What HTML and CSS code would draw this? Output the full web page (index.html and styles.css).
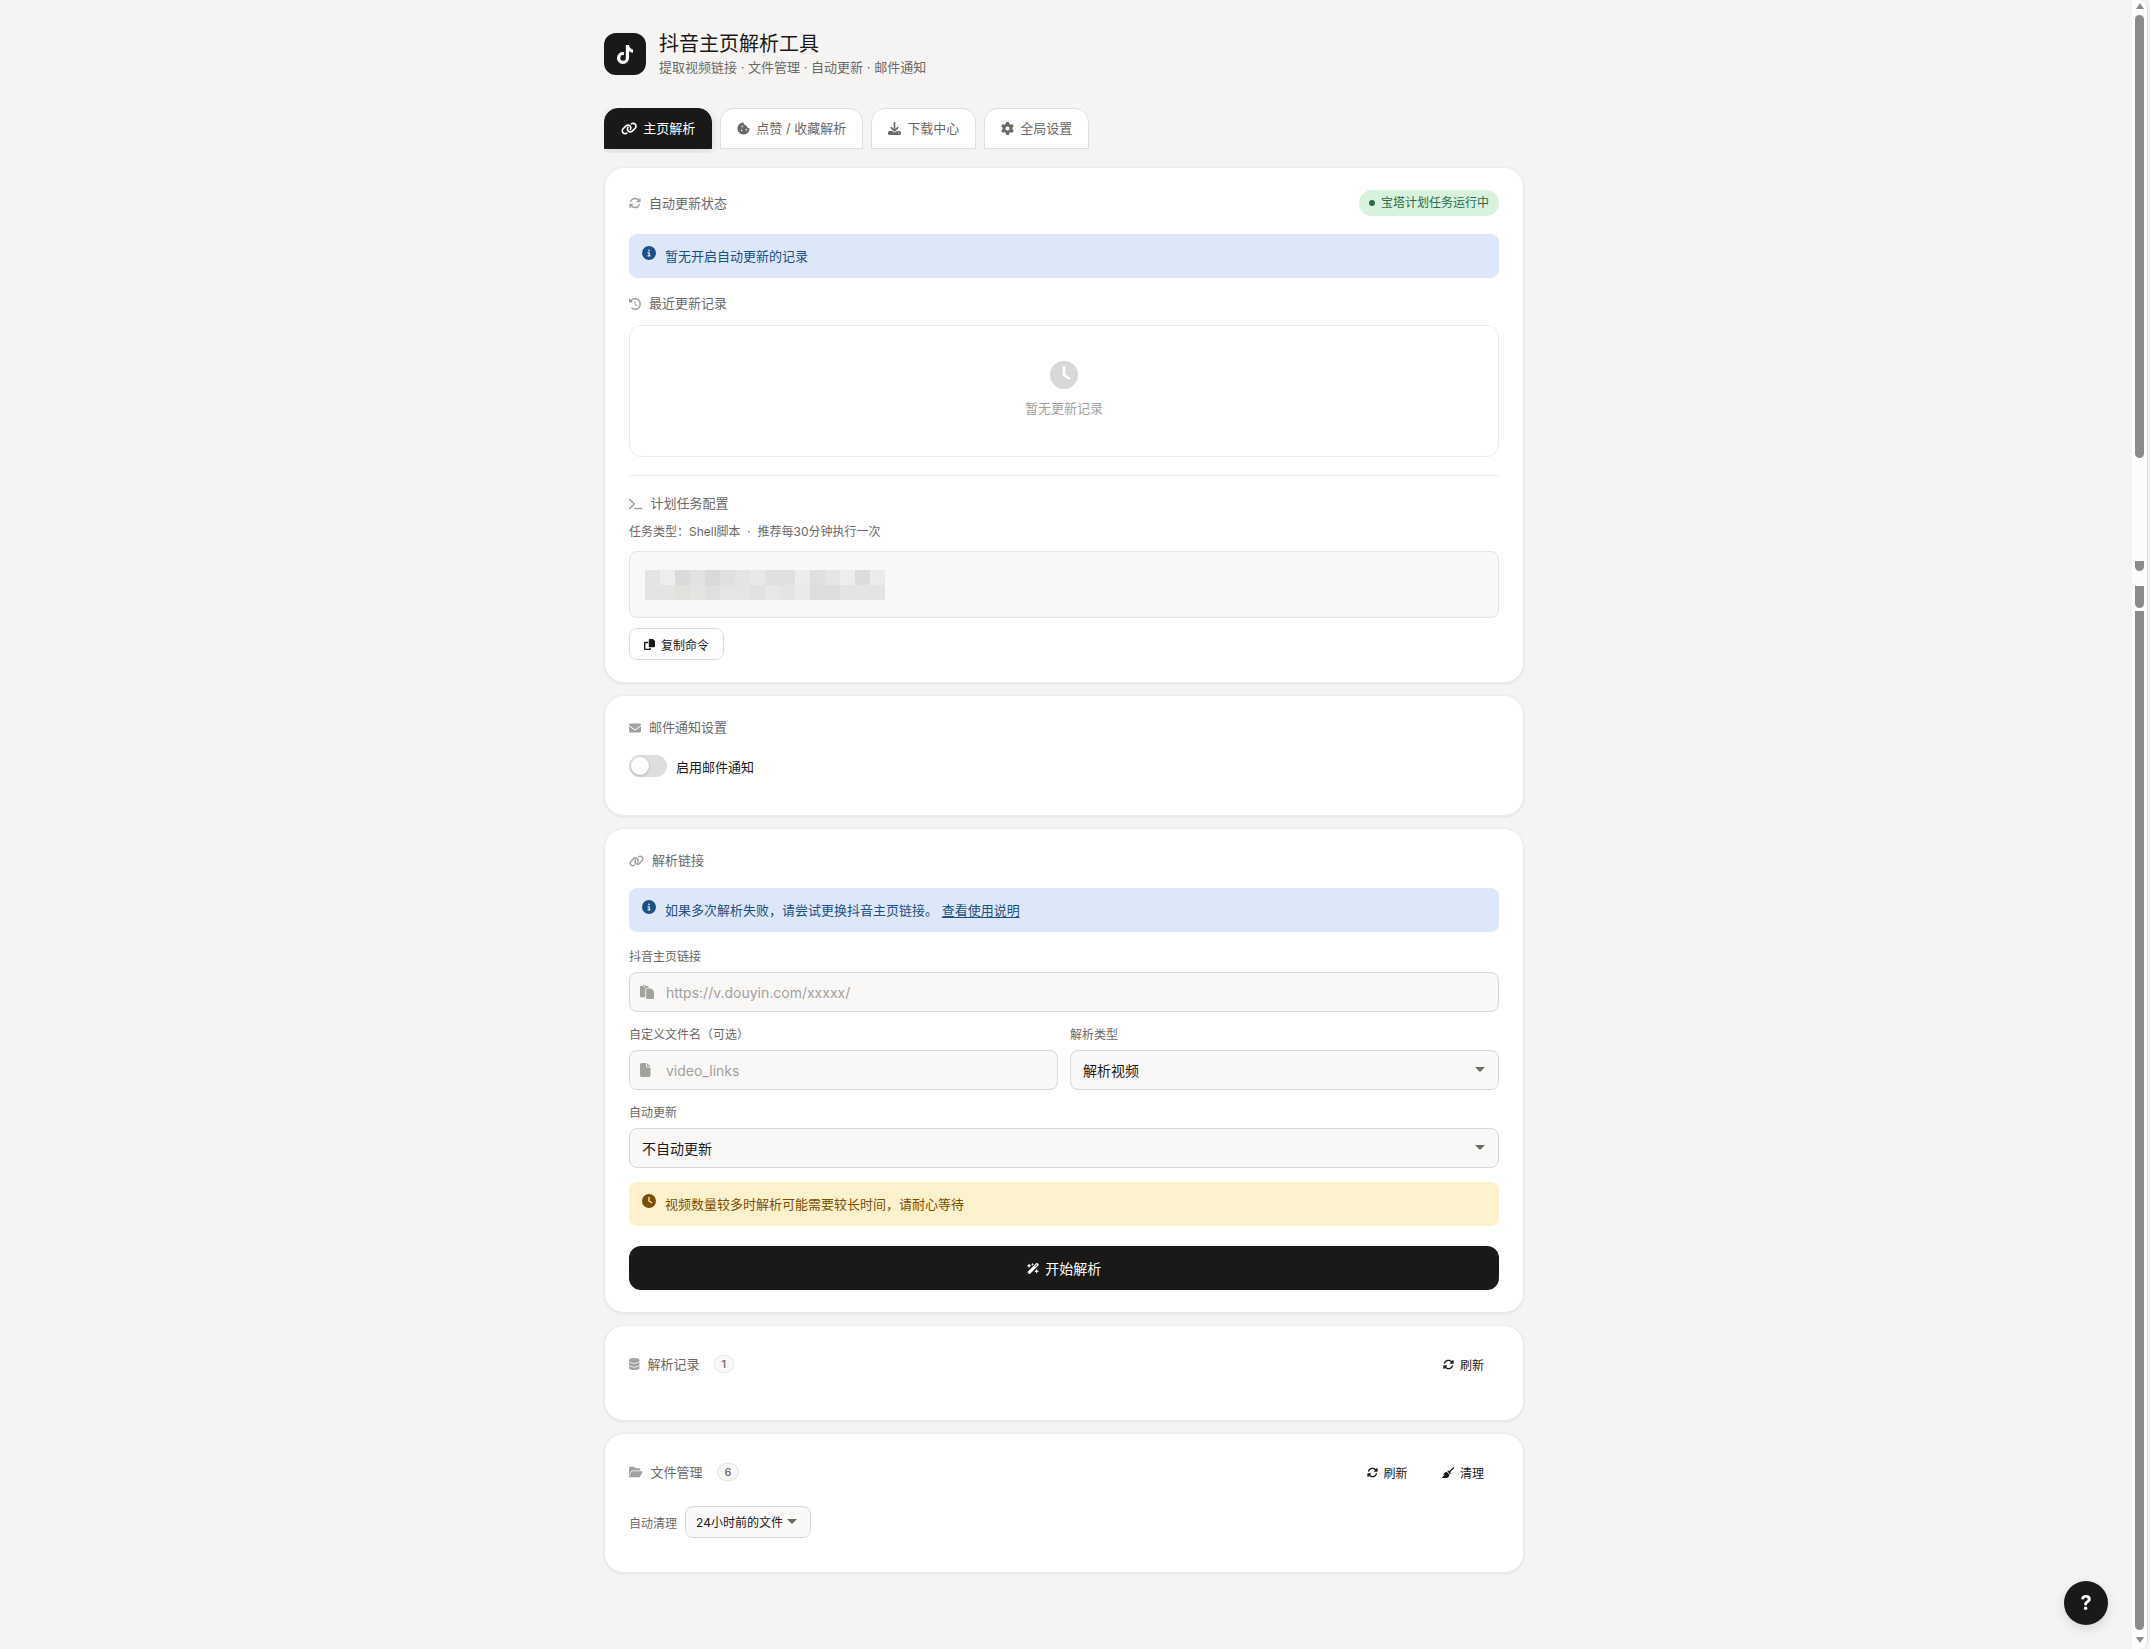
FILE: index.html
```html
<!DOCTYPE html>
<html lang="zh-CN">

<head>
    <meta charset="UTF-8">
    <meta name="viewport" content="width=device-width, initial-scale=1.0">
    <title>抖音主页解析工具</title>
    <link rel="stylesheet" href="styles.css">
</head>

<body>
    <!-- icons used more than once -->
    <svg class="defs" aria-hidden="true">
        <defs>
            <path id="i-refresh" d="M105.1 202.6c7.7-21.8 20.2-42.3 37.8-59.8c62.5-62.5 163.8-62.5 226.3 0L386.3 160H352c-17.7 0-32 14.3-32 32s14.3 32 32 32H463.5h.4c17.7 0 32-14.3 32-32V80c0-17.7-14.3-32-32-32s-32 14.3-32 32v35.2L414.4 97.6c-87.5-87.5-229.3-87.5-316.8 0C73.2 122 55.6 150.7 44.8 181.4c-5.9 16.7 2.9 34.9 19.5 40.8s34.9-2.9 40.8-19.5zM39 289.3c-5 1.5-9.8 4.2-13.7 8.2c-4 4-6.7 8.8-8.1 14c-.3 1.2-.6 2.5-.8 3.8c-.3 1.7-.4 3.4-.4 5.1V432c0 17.7 14.3 32 32 32s32-14.3 32-32V396.9l17.6 17.5c87.5 87.4 229.3 87.4 316.7 0c24.4-24.4 42.1-53.1 52.9-83.7c5.9-16.7-2.9-34.9-19.5-40.8s-34.9 2.9-40.8 19.5c-7.7 21.8-20.2 42.3-37.8 59.8c-62.5 62.5-163.8 62.5-226.3 0l-.1-.1L125.6 352H160c17.7 0 32-14.3 32-32s-14.3-32-32-32H48.4c-1.6 0-3.2 .1-4.8 .3s-3.1 .5-4.6 1z"/>
            <path id="i-link" d="M579.8 267.7c56.5-56.5 56.5-148 0-204.5c-50-50-128.8-56.5-186.3-15.4l-1.6 1.1c-14.4 10.3-17.7 30.3-7.4 44.6s30.3 17.7 44.6 7.4l1.6-1.1c32.1-22.9 76-19.3 103.8 8.6c31.5 31.5 31.5 82.5 0 114L422.3 334.8c-31.5 31.5-82.5 31.5-114 0c-27.9-27.9-31.5-71.8-8.6-103.8l1.1-1.6c10.3-14.4 6.9-34.4-7.4-44.6s-34.4-6.9-44.6 7.4l-1.1 1.6C206.5 251.2 213 330 263 380c56.5 56.5 148 56.5 204.5 0L579.8 267.7zM60.2 244.3c-56.5 56.5-56.5 148 0 204.5c50 50 128.8 56.5 186.3 15.4l1.6-1.1c14.4-10.3 17.7-30.3 7.4-44.6s-30.3-17.7-44.6-7.4l-1.6 1.1c-32.1 22.9-76 19.3-103.8-8.6C74 372 74 321 105.5 289.5L217.7 177.2c31.5-31.5 82.5-31.5 114 0c27.9 27.9 31.5 71.8 8.6 103.9l-1.1 1.6c-10.3 14.4-6.9 34.4 7.4 44.6s34.4 6.9 44.6-7.4l1.1-1.6C433.5 260.8 427 182 377 132c-56.5-56.5-148-56.5-204.5 0L60.2 244.3z"/>
            <path id="i-info" d="M256 512A256 256 0 1 0 256 0a256 256 0 1 0 0 512zM216 336h24V272H216c-13.3 0-24-10.7-24-24s10.7-24 24-24h48c13.3 0 24 10.7 24 24v88h8c13.3 0 24 10.7 24 24s-10.7 24-24 24H216c-13.3 0-24-10.7-24-24s10.7-24 24-24zm40-208a32 32 0 1 1 0 64 32 32 0 1 1 0-64z"/>
            <path id="i-clock" d="M256 0a256 256 0 1 1 0 512A256 256 0 1 1 256 0zM232 120V256c0 8 4 15.5 10.7 20l96 64c11 7.4 25.9 4.4 33.3-6.7s4.4-25.9-6.7-33.3L280 243.2V120c0-13.3-10.7-24-24-24s-24 10.7-24 24z"/>
        </defs>
    </svg>

    <div class="page">
        <div class="container">
            <header class="header">
                <div class="logo">
                    <svg viewBox="0 0 448 512"><path d="M448 209.9a210.1 210.1 0 0 1-122.8-39.3V349.4A162.6 162.6 0 1 1 185 188.3V278.2a74.6 74.6 0 1 0 52.2 71.2V0l88 0a121.2 121.2 0 0 0 1.9 22.2h0A122.2 122.2 0 0 0 381 102.4a121.4 121.4 0 0 0 67 20.1z"/></svg>
                </div>
                <div>
                    <h1>抖音主页解析工具</h1>
                    <p>提取视频链接 · 文件管理 · 自动更新 · 邮件通知</p>
                </div>
            </header>

            <nav class="tabs">
                <button type="button" class="tab active">
                    <svg viewBox="0 0 640 512"><use href="#i-link"/></svg>主页解析
                </button>
                <button type="button" class="tab">
                    <svg viewBox="0 0 512 512"><path d="M257.5 27.6c-.8-5.4-4.9-9.8-10.3-10.6c-22.1-3.1-44.6 .9-64.4 11.4l-74 39.5C89.1 78.4 73.2 94.9 63.4 115L26.7 190.6c-9.8 20.1-13 42.9-9.1 64.9l14.5 82.8c3.9 22.1 14.6 42.3 30.7 57.9l60.3 58.4c16.1 15.6 36.6 25.6 58.7 28.7l83 11.7c22.1 3.1 44.6-.9 64.4-11.4l74-39.5c19.7-10.5 35.6-27 45.4-47.2l36.7-75.5c9.8-20.1 13-42.9 9.1-64.9c-.9-5.3-5.3-9.3-10.6-10.1c-51.5-8.2-92.8-47.1-104.5-97.4c-1.8-7.6-8-13.4-15.7-14.6c-54.6-8.7-97.7-52-106.2-106.8zM208 144a32 32 0 1 1 0 64 32 32 0 1 1 0-64zM144 336a32 32 0 1 1 64 0 32 32 0 1 1 -64 0zm224-64a32 32 0 1 1 0 64 32 32 0 1 1 0-64z"/></svg>点赞 / 收藏解析
                </button>
                <button type="button" class="tab">
                    <svg viewBox="0 0 512 512"><path d="M288 32c0-17.7-14.3-32-32-32s-32 14.3-32 32V274.7l-73.4-73.4c-12.5-12.5-32.8-12.5-45.3 0s-12.5 32.8 0 45.3l128 128c12.5 12.5 32.8 12.5 45.3 0l128-128c12.5-12.5 12.5-32.8 0-45.3s-32.8-12.5-45.3 0L288 274.7V32zM64 352c-35.3 0-64 28.7-64 64v32c0 35.3 28.7 64 64 64H448c35.3 0 64-28.7 64-64V416c0-35.3-28.7-64-64-64H346.5l-45.3 45.3c-25 25-65.5 25-90.5 0L165.5 352H64zm368 56a24 24 0 1 1 0 48 24 24 0 1 1 0-48z"/></svg>下载中心
                </button>
                <button type="button" class="tab">
                    <svg viewBox="0 0 512 512"><path d="M495.9 166.6c3.2 8.7 .5 18.4-6.4 24.6l-43.3 39.4c1.1 8.3 1.7 16.8 1.7 25.4s-.6 17.1-1.7 25.4l43.3 39.4c6.9 6.2 9.6 15.9 6.4 24.6c-4.4 11.9-9.7 23.3-15.8 34.3l-4.7 8.1c-6.6 11-14 21.4-22.1 31.2c-5.9 7.2-15.7 9.6-24.5 6.8l-55.7-17.7c-13.4 10.3-28.2 18.9-44 25.4l-12.5 57.1c-2 9.1-9 16.3-18.2 17.8c-13.8 2.3-28 3.5-42.5 3.5s-28.7-1.2-42.5-3.5c-9.2-1.5-16.2-8.7-18.2-17.8l-12.5-57.1c-15.8-6.5-30.6-15.1-44-25.4L83.1 425.9c-8.8 2.8-18.6 .3-24.5-6.8c-8.1-9.8-15.5-20.2-22.1-31.2l-4.7-8.1c-6.1-11-11.4-22.4-15.8-34.3c-3.2-8.7-.5-18.4 6.4-24.6l43.3-39.4C64.6 273.1 64 264.6 64 256s.6-17.1 1.7-25.4L22.4 191.2c-6.9-6.2-9.6-15.9-6.4-24.6c4.4-11.9 9.7-23.3 15.8-34.3l4.7-8.1c6.6-11 14-21.4 22.1-31.2c5.9-7.2 15.7-9.6 24.5-6.8l55.7 17.7c13.4-10.3 28.2-18.9 44-25.4l12.5-57.1c2-9.1 9-16.3 18.2-17.8C227.3 1.2 241.5 0 256 0s28.7 1.2 42.5 3.5c9.2 1.5 16.2 8.7 18.2 17.8l12.5 57.1c15.8 6.5 30.6 15.1 44 25.4l55.7-17.7c8.8-2.8 18.6-.3 24.5 6.8c8.1 9.8 15.5 20.2 22.1 31.2l4.7 8.1c6.1 11 11.4 22.4 15.8 34.3zM256 336a80 80 0 1 0 0-160 80 80 0 1 0 0 160z"/></svg>全局设置
                </button>
            </nav>

            <main class="cards">
                <section class="card">
                    <div class="card-header">
                        <h2 class="title"><svg viewBox="0 0 512 512"><use href="#i-refresh"/></svg>自动更新状态</h2>
                        <span class="status">宝塔计划任务运行中</span>
                    </div>
                    <div class="alert info">
                        <svg viewBox="0 0 512 512"><use href="#i-info"/></svg>
                        <span>暂无开启自动更新的记录</span>
                    </div>
                    <h2 class="title history-title"><svg viewBox="0 0 512 512"><path d="M75 75L41 41C25.9 25.9 0 36.6 0 57.9V168c0 13.3 10.7 24 24 24H134.1c21.4 0 32.1-25.9 17-41l-30.8-30.8C155 85.5 203 64 256 64c106 0 192 86 192 192s-86 192-192 192c-40.8 0-78.6-12.7-109.7-34.4c-14.5-10.1-34.4-6.6-44.6 7.9s-6.6 34.4 7.9 44.6C151.2 495 201.7 512 256 512c141.4 0 256-114.6 256-256S397.4 0 256 0C185.3 0 121.3 28.7 75 75zm181 53c-13.3 0-24 10.7-24 24V256c0 6.4 2.5 12.5 7 17l72 72c9.4 9.4 24.6 9.4 33.9 0s9.4-24.6 0-33.9l-65-65V152c0-13.3-10.7-24-24-24z"/></svg>最近更新记录</h2>
                    <div class="empty">
                        <svg viewBox="0 0 512 512"><use href="#i-clock"/></svg>
                        <p>暂无更新记录</p>
                    </div>
                    <hr class="divider">
                    <h2 class="title"><svg viewBox="0 0 576 512"><path d="M9.4 86.6C-3.1 74.1-3.1 53.9 9.4 41.4s32.8-12.5 45.3 0l192 192c12.5 12.5 12.5 32.8 0 45.3l-192 192c-12.5 12.5-32.8 12.5-45.3 0s-12.5-32.8 0-45.3L178.7 256 9.4 86.6zM256 416H544c17.7 0 32 14.3 32 32s-14.3 32-32 32H256c-17.7 0-32-14.3-32-32s14.3-32 32-32z"/></svg>计划任务配置</h2>
                    <p class="desc">任务类型：Shell脚本 &nbsp;·&nbsp; 推荐每30分钟执行一次</p>
                    <div class="code">
                        <!-- masked command -->
                        <svg viewBox="0 0 16 2" shape-rendering="crispEdges">
                            <rect width="16" height="2" fill="#e4e4e3"/>
                            <rect x="1" width="1" height="1" fill="#eeedec"/>
                            <rect x="2" width="1" height="1" fill="#dbdad9"/>
                            <rect x="3" width="1" height="1" fill="#e3e2e2"/>
                            <rect x="4" width="1" height="1" fill="#dad9d8"/>
                            <rect x="5" width="1" height="1" fill="#e0e0e0"/>
                            <rect x="7" width="1" height="1" fill="#e9e8e7"/>
                            <rect x="8" width="2" height="1" fill="#e0e0df"/>
                            <rect x="10" width="1" height="1" fill="#ececeb"/>
                            <rect x="11" width="1" height="1" fill="#e0dfde"/>
                            <rect x="12" width="1" height="1" fill="#e5e5e6"/>
                            <rect x="13" width="1" height="1" fill="#eeedec"/>
                            <rect x="14" width="1" height="1" fill="#dcdcdf"/>
                            <rect x="15" width="1" height="1" fill="#ebebea"/>
                            <rect x="2" y="1" width="1" height="1" fill="#e3e1dd"/>
                            <rect x="4" y="1" width="1" height="1" fill="#dfdfdd"/>
                            <rect x="5" y="1" width="2" height="1" fill="#e6e5e5"/>
                            <rect x="7" y="1" width="1" height="1" fill="#e2e1e0"/>
                            <rect x="8" y="1" width="1" height="1" fill="#e7e7e6"/>
                            <rect x="10" y="1" width="1" height="1" fill="#eae9e8"/>
                            <rect x="11" y="1" width="1" height="1" fill="#dededd"/>
                            <rect x="12" y="1" width="1" height="1" fill="#dcdddf"/>
                        </svg>
                    </div>
                    <button type="button" class="btn outline"><svg viewBox="0 0 512 512"><path d="M272 0H396.1c12.7 0 24.9 5.1 33.9 14.1l67.9 67.9c9 9 14.1 21.2 14.1 33.9V336c0 26.5-21.5 48-48 48H272c-26.5 0-48-21.5-48-48V48c0-26.5 21.5-48 48-48zM48 128H192v64H64V448H256V416h64v48c0 26.5-21.5 48-48 48H48c-26.5 0-48-21.5-48-48V176c0-26.5 21.5-48 48-48z"/></svg>复制命令</button>
                </section>

                <section class="card">
                    <div class="card-header">
                        <h2 class="title"><svg viewBox="0 0 512 512"><path d="M48 64C21.5 64 0 85.5 0 112c0 15.1 7.1 29.3 19.2 38.4L236.8 313.6c11.4 8.5 27 8.5 38.4 0L492.8 150.4c12.1-9.1 19.2-23.3 19.2-38.4c0-26.5-21.5-48-48-48H48zM0 176V384c0 35.3 28.7 64 64 64H448c35.3 0 64-28.7 64-64V176L294.4 339.2c-22.8 17.1-54 17.1-76.8 0L0 176z"/></svg>邮件通知设置</h2>
                    </div>
                    <label class="switch">
                        <input type="checkbox">启用邮件通知
                    </label>
                </section>

                <section class="card">
                    <div class="card-header">
                        <h2 class="title"><svg viewBox="0 0 640 512"><use href="#i-link"/></svg>解析链接</h2>
                    </div>
                    <div class="alert info">
                        <svg viewBox="0 0 512 512"><use href="#i-info"/></svg>
                        <span>如果多次解析失败，请尝试更换抖音主页链接。 <a href="#">查看使用说明</a></span>
                    </div>
                    <form class="form">
                        <div class="field wide">
                            <label for="url">抖音主页链接</label>
                            <div class="control">
                                <svg viewBox="0 0 512 512"><path d="M160 0c-23.7 0-44.4 12.9-55.4 32H48C21.5 32 0 53.5 0 80V400c0 26.5 21.5 48 48 48H192V176c0-44.2 35.8-80 80-80h48V80c0-26.5-21.5-48-48-48H215.4C204.4 12.9 183.7 0 160 0zM272 128c-26.5 0-48 21.5-48 48V448v16c0 26.5 21.5 48 48 48H464c26.5 0 48-21.5 48-48V243.9c0-12.7-5.1-24.9-14.1-33.9l-67.9-67.9c-9-9-21.2-14.1-33.9-14.1H320 272zM160 40a24 24 0 1 1 0 48 24 24 0 1 1 0-48z"/></svg>
                                <input type="text" id="url" placeholder="https://v.douyin.com/xxxxx/">
                            </div>
                        </div>
                        <div class="field">
                            <label for="filename">自定义文件名（可选）</label>
                            <div class="control">
                                <svg viewBox="0 0 384 512"><path d="M0 64C0 28.7 28.7 0 64 0H224V128c0 17.7 14.3 32 32 32H384V448c0 35.3-28.7 64-64 64H64c-35.3 0-64-28.7-64-64V64zm384 64H256V0L384 128z"/></svg>
                                <input type="text" id="filename" placeholder="video_links">
                            </div>
                        </div>
                        <div class="field">
                            <label for="type">解析类型</label>
                            <div class="control arrow">
                                <select id="type">
                                    <option>解析视频</option>
                                </select>
                            </div>
                        </div>
                        <div class="field wide">
                            <label for="auto">自动更新</label>
                            <div class="control arrow">
                                <select id="auto">
                                    <option>不自动更新</option>
                                </select>
                            </div>
                        </div>
                        <div class="alert warn wide">
                            <svg viewBox="0 0 512 512"><use href="#i-clock"/></svg>
                            <span>视频数量较多时解析可能需要较长时间，请耐心等待</span>
                        </div>
                        <button type="button" class="btn primary wide"><svg viewBox="0 0 576 512"><path d="M234.7 42.7L197 56.8c-3 1.1-5 4-5 7.2s2 6.1 5 7.2l37.7 14.1L248.8 123c1.1 3 4 5 7.2 5s6.1-2 7.2-5l14.1-37.7L315 71.2c3-1.1 5-4 5-7.2s-2-6.1-5-7.2L277.3 42.7 263.2 5c-1.1-3-4-5-7.2-5s-6.1 2-7.2 5L234.7 42.7zM46.1 395.4c-18.7 18.7-18.7 49.1 0 67.9l34.6 34.6c18.7 18.7 49.1 18.7 67.9 0L529.9 116.5c18.7-18.7 18.7-49.1 0-67.9L495.3 14.1c-18.7-18.7-49.1-18.7-67.9 0L46.1 395.4zM484.6 82.6l-105 105-23.3-23.3 105-105 23.3 23.3zM7.5 117.2C3 118.9 0 123.2 0 128s3 9.1 7.5 10.8L64 160l21.2 56.5c1.7 4.5 6 7.5 10.8 7.5s9.1-3 10.8-7.5L128 160l56.5-21.2c4.5-1.7 7.5-6 7.5-10.8s-3-9.1-7.5-10.8L128 96 106.8 39.5C105.1 35 100.8 32 96 32s-9.1 3-10.8 7.5L64 96 7.5 117.2zm352 256c-4.5 1.7-7.5 6-7.5 10.8s3 9.1 7.5 10.8L416 416l21.2 56.5c1.7 4.5 6 7.5 10.8 7.5s9.1-3 10.8-7.5L480 416l56.5-21.2c4.5-1.7 7.5-6 7.5-10.8s-3-9.1-7.5-10.8L480 352l-21.2-56.5c-1.7-4.5-6-7.5-10.8-7.5s-9.1 3-10.8 7.5L416 352l-56.5 21.2z"/></svg>开始解析</button>
                    </form>
                </section>

                <section class="card">
                    <div class="card-header">
                        <div class="title-group">
                            <h2 class="title"><svg viewBox="0 0 448 512"><path d="M448 80v48c0 44.2-100.3 80-224 80S0 172.2 0 128V80C0 35.8 100.3 0 224 0S448 35.8 448 80zM393.2 214.7c20.8-7.4 39.9-16.9 54.8-28.6V288c0 44.2-100.3 80-224 80S0 332.2 0 288V186.1c14.9 11.8 34 21.2 54.8 28.6C99.7 230.7 159.5 240 224 240s124.3-9.3 169.2-25.3zM0 346.1c14.9 11.8 34 21.2 54.8 28.6C99.7 390.7 159.5 400 224 400s124.3-9.3 169.2-25.3c20.8-7.4 39.9-16.9 54.8-28.6V432c0 44.2-100.3 80-224 80S0 476.2 0 432V346.1z"/></svg>解析记录</h2>
                            <span class="count">1</span>
                        </div>
                        <div class="actions">
                            <button type="button" class="btn"><svg viewBox="0 0 512 512"><use href="#i-refresh"/></svg>刷新</button>
                        </div>
                    </div>
                </section>

                <section class="card">
                    <div class="card-header">
                        <div class="title-group">
                            <h2 class="title"><svg viewBox="0 0 576 512"><path d="M88.7 223.8L0 375.8V96C0 60.7 28.7 32 64 32H181.5c17 0 33.3 6.7 45.3 18.7l26.5 26.5c12 12 28.3 18.7 45.3 18.7H416c35.3 0 64 28.7 64 64v32H144c-22.8 0-43.8 12.1-55.3 31.8zm27.6 16.1C122.1 230 132.6 224 144 224H544c11.5 0 22 6.1 27.7 16.1s5.7 22.2-.1 32.1l-112 192C453.9 474 443.4 480 432 480H32c-11.5 0-22-6.1-27.7-16.1s-5.7-22.2 .1-32.1l112-192z"/></svg>文件管理</h2>
                            <span class="count">6</span>
                        </div>
                        <div class="actions">
                            <button type="button" class="btn"><svg viewBox="0 0 512 512"><use href="#i-refresh"/></svg>刷新</button>
                            <button type="button" class="btn"><svg viewBox="0 0 576 512"><path d="M566.6 54.6c12.5-12.5 12.5-32.8 0-45.3s-32.8-12.5-45.3 0l-192 192-34.7-34.7c-4.2-4.2-10-6.6-16-6.6c-12.5 0-22.6 10.1-22.6 22.6v29.1L364.3 320h29.1c12.5 0 22.6-10.1 22.6-22.6c0-6-2.4-11.8-6.6-16l-34.7-34.7 192-192zM341.1 353.4L222.6 234.9c-42.7-3.7-85.2 11.7-115.8 42.3l-8 8C76.5 307.5 64 337.7 64 369.2c0 6.8 7.1 11.2 13.2 8.2l51.1-25.5c5-2.5 9.5 4.1 5.4 7.9L7.3 473.4C2.7 477.6 0 483.6 0 489.9C0 502.1 9.9 512 22.1 512l173.3 0c38.8 0 75.9-15.4 103.4-42.8c30.6-30.6 45.9-73.1 42.3-115.8z"/></svg>清理</button>
                        </div>
                    </div>
                    <div class="clean">
                        <label for="clean">自动清理</label>
                        <div class="control arrow small">
                            <select id="clean">
                                <option>24小时前的文件</option>
                            </select>
                        </div>
                    </div>
                </section>
            </main>
        </div>
    </div>

    <div class="scrollbar" aria-hidden="true">
        <i class="up"></i>
        <i class="thumb first"></i>
        <i class="thumb second"></i>
        <i class="thumb third"></i>
        <i class="thumb last"></i>
        <i class="down"></i>
    </div>

    <button type="button" class="help" aria-label="帮助">?</button>
</body>

</html>
```
FILE: styles.css
```css
* {
    box-sizing: border-box;
}
body {
    display: flex;
    min-height: 100vh;
    margin: 0;
    background: #f5f4f2;
    color: #1a1917;
    font-family: Inter, "Noto Sans CJK SC", sans-serif;
    font-size: 13px;
}
h1, h2, p {
    margin: 0;
    font-weight: 400;
}
svg {
    display: block;
    flex: none;
    fill: currentColor;
}
button, input, select {
    font-family: inherit;
    color: inherit;
}
.defs {
    position: absolute;
    width: 0;
    height: 0;
}
.page {
    flex: 1;
    padding: 31px 24px 40px 20px;
}
.container {
    max-width: 920px;
    margin: 0 auto;
}

/* header */
.header {
    display: flex;
    align-items: center;
    gap: 13px;
    margin-bottom: 31px;
}
.logo {
    display: flex;
    align-items: center;
    justify-content: center;
    width: 42px;
    height: 42px;
    border-radius: 12px;
    background: #1a1917;
    color: #fff;
}
.logo svg {
    height: 19px;
}
.header h1 {
    font-size: 20px;
    line-height: 26px;
}
.header p {
    color: #6b6966;
    line-height: 20px;
}

/* tabs */
.tabs {
    display: flex;
    gap: 8px;
    margin-bottom: 14px;
    padding-bottom: 4px;
    overflow: hidden;
}
.tab {
    display: flex;
    align-items: center;
    gap: 6px;
    padding: 10px 16px;
    border: 1px solid #e0dfde;
    border-radius: 14px 14px 0 0;
    background: #fff;
    color: #6b6966;
    font-size: 13px;
    line-height: 19px;
}
.tab svg {
    height: 13px;
}
.tab.active {
    border-color: #1a1917;
    background: #1a1917;
    color: #fff;
    box-shadow: 0 2px 8px rgba(0, 0, 0, 0.12);
}

/* cards */
.cards {
    display: flex;
    flex-direction: column;
    gap: 12px;
}
.card {
    padding: 22px 24px;
    border: 1px solid #ebebea;
    border-radius: 20px;
    background: #fff;
    box-shadow: 0 1px 3px rgba(0, 0, 0, 0.08);
}
.card-header {
    display: flex;
    align-items: center;
    justify-content: space-between;
    margin-bottom: 18px;
}
.title {
    display: flex;
    align-items: center;
    gap: 8px;
    color: #6b6966;
    font-size: 13px;
    line-height: 19px;
}
.title svg {
    height: 12px;
    color: #a3a19e;
}
.title-group {
    display: flex;
    align-items: center;
    gap: 14px;
}
.count {
    padding: 0 7px;
    border: 1px solid #e6e5e4;
    border-radius: 9px;
    background: #f9f8f7;
    color: #6b6966;
    font-size: 11px;
    font-weight: 500;
    line-height: 16px;
}
.actions {
    display: flex;
    gap: 4px;
}
.status {
    display: flex;
    align-items: center;
    gap: 6px;
    padding: 0 10px;
    border-radius: 13px;
    background: #d8f3dd;
    color: #2d6a4f;
    font-size: 12px;
    line-height: 26px;
}
.status::before {
    content: "";
    width: 6px;
    height: 6px;
    border-radius: 50%;
    background: #2d6a4f;
}

.alert {
    display: flex;
    gap: 9px;
    padding: 12px 13px;
    border-radius: 8px;
    line-height: 20px;
}
.alert svg {
    height: 14px;
}
.alert a {
    color: inherit;
    text-underline-offset: 2px;
}
.info {
    background: #dce8fa;
    color: #1d4e89;
}
.warn {
    background: #fef1cd;
    color: #7d4e00;
}

.history-title {
    margin: 16px 0 12px;
}
.empty {
    display: flex;
    flex-direction: column;
    align-items: center;
    gap: 8px;
    padding: 35px 20px 37px;
    border: 1px solid #ebebea;
    border-radius: 12px;
    color: #a3a19e;
    line-height: 22px;
}
.empty svg {
    height: 28px;
    color: #d8d8d8;
}
.divider {
    margin: 18px 0;
    border: 0;
    border-top: 1px solid #ebebea;
}
.desc {
    margin: 10px 0;
    color: #6b6966;
    font-size: 12px;
    line-height: 18px;
}
.code {
    margin-bottom: 10px;
    padding: 18px 15px 17px;
    border: 1px solid #e6e5e4;
    border-radius: 8px;
    background: #f9f8f7;
}
.code svg {
    width: 240px;
}

/* buttons */
.btn {
    display: flex;
    align-items: center;
    justify-content: center;
    gap: 6px;
    height: 32px;
    padding: 0 14px;
    border: 1px solid transparent;
    border-radius: 8px;
    background: transparent;
    font-size: 12px;
}
.btn svg {
    height: 11px;
}
.outline {
    border-color: #dddcdb;
    background: #fff;
}
.primary {
    height: 44px;
    margin-top: 6px;
    border-radius: 12px;
    background: #1a1917;
    color: #fff;
    font-size: 14px;
}

/* form */
.switch {
    display: flex;
    align-items: center;
    gap: 9px;
    height: 22px;
    margin-bottom: 16px;
}
.switch input {
    appearance: none;
    width: 38px;
    height: 22px;
    margin: 0;
    padding: 2px;
    border-radius: 11px;
    background: #dedede;
}
.switch input::before {
    content: "";
    display: block;
    width: 18px;
    height: 18px;
    border-radius: 50%;
    background: #fff;
    box-shadow: 0 1px 3px rgba(0, 0, 0, 0.2);
}
.switch input:checked {
    background: #1a1917;
}
.switch input:checked::before {
    margin-left: 16px;
}
.form {
    display: grid;
    grid-template-columns: 1fr 1fr;
    gap: 14px 12px;
    margin-top: 16px;
}
.wide {
    grid-column: 1 / -1;
}
.field label {
    display: block;
    margin-bottom: 6px;
    color: #6b6966;
    font-size: 12px;
    line-height: 18px;
}
.control {
    position: relative;
}
.control svg {
    position: absolute;
    top: 13px;
    left: 11px;
    height: 14px;
    color: #a3a19e;
}
.control input, .control select {
    display: block;
    width: 100%;
    height: 40px;
    border: 1px solid #d9d8d7;
    border-radius: 8px;
    background: #f9f8f7;
    font-size: 14px;
}
.control input {
    padding: 0 12px 0 36px;
}
.control input::placeholder {
    color: #a3a19e;
}
.control select {
    appearance: none;
    padding: 0 30px 0 12px;
}
.arrow::after {
    content: "";
    position: absolute;
    top: 17px;
    right: 14px;
    border: 5px solid transparent;
    border-top-color: #6b6966;
    border-bottom: 0;
    pointer-events: none;
}
.clean {
    display: flex;
    align-items: center;
    gap: 8px;
    margin-bottom: 12px;
}
.clean label {
    color: #6b6966;
    font-size: 12px;
}
.control.small select {
    height: 32px;
    padding: 0 27px 0 10px;
    font-size: 12px;
}
.small::after {
    top: 13px;
}

/* scrollbar */
.scrollbar {
    display: flex;
    flex-direction: column;
    align-items: center;
    width: 16px;
    margin-right: 2px;
    padding: 3px 0 6px;
    border-right: 1px solid #dcdcdc;
    border-radius: 0 8px 8px 0;
    background: #fcfcfc;
}
.up, .down {
    border: 4px solid transparent;
}
.up {
    margin-bottom: 6px;
    border-top: 0;
    border-bottom: 6px solid #8b8b8b;
}
.down {
    margin-top: 7px;
    border-bottom: 0;
    border-top: 6px solid #8b8b8b;
}
.thumb {
    width: 9px;
    border-radius: 0 0 5px 5px;
    background: #8b8b8b;
}
.first {
    height: 443px;
    margin-bottom: 103px;
    border-radius: 5px;
}
.second {
    height: 10px;
    margin-bottom: 15px;
}
.third {
    height: 22px;
    margin-bottom: 3px;
}
.last {
    flex: 1;
}

.help {
    position: fixed;
    right: 42px;
    bottom: 24px;
    width: 44px;
    height: 44px;
    padding: 0;
    border: 0;
    border-radius: 50%;
    background: #1a1917;
    color: #fff;
    font-size: 20px;
    font-weight: 700;
    box-shadow: 0 4px 12px rgba(0, 0, 0, 0.12);
}
```
